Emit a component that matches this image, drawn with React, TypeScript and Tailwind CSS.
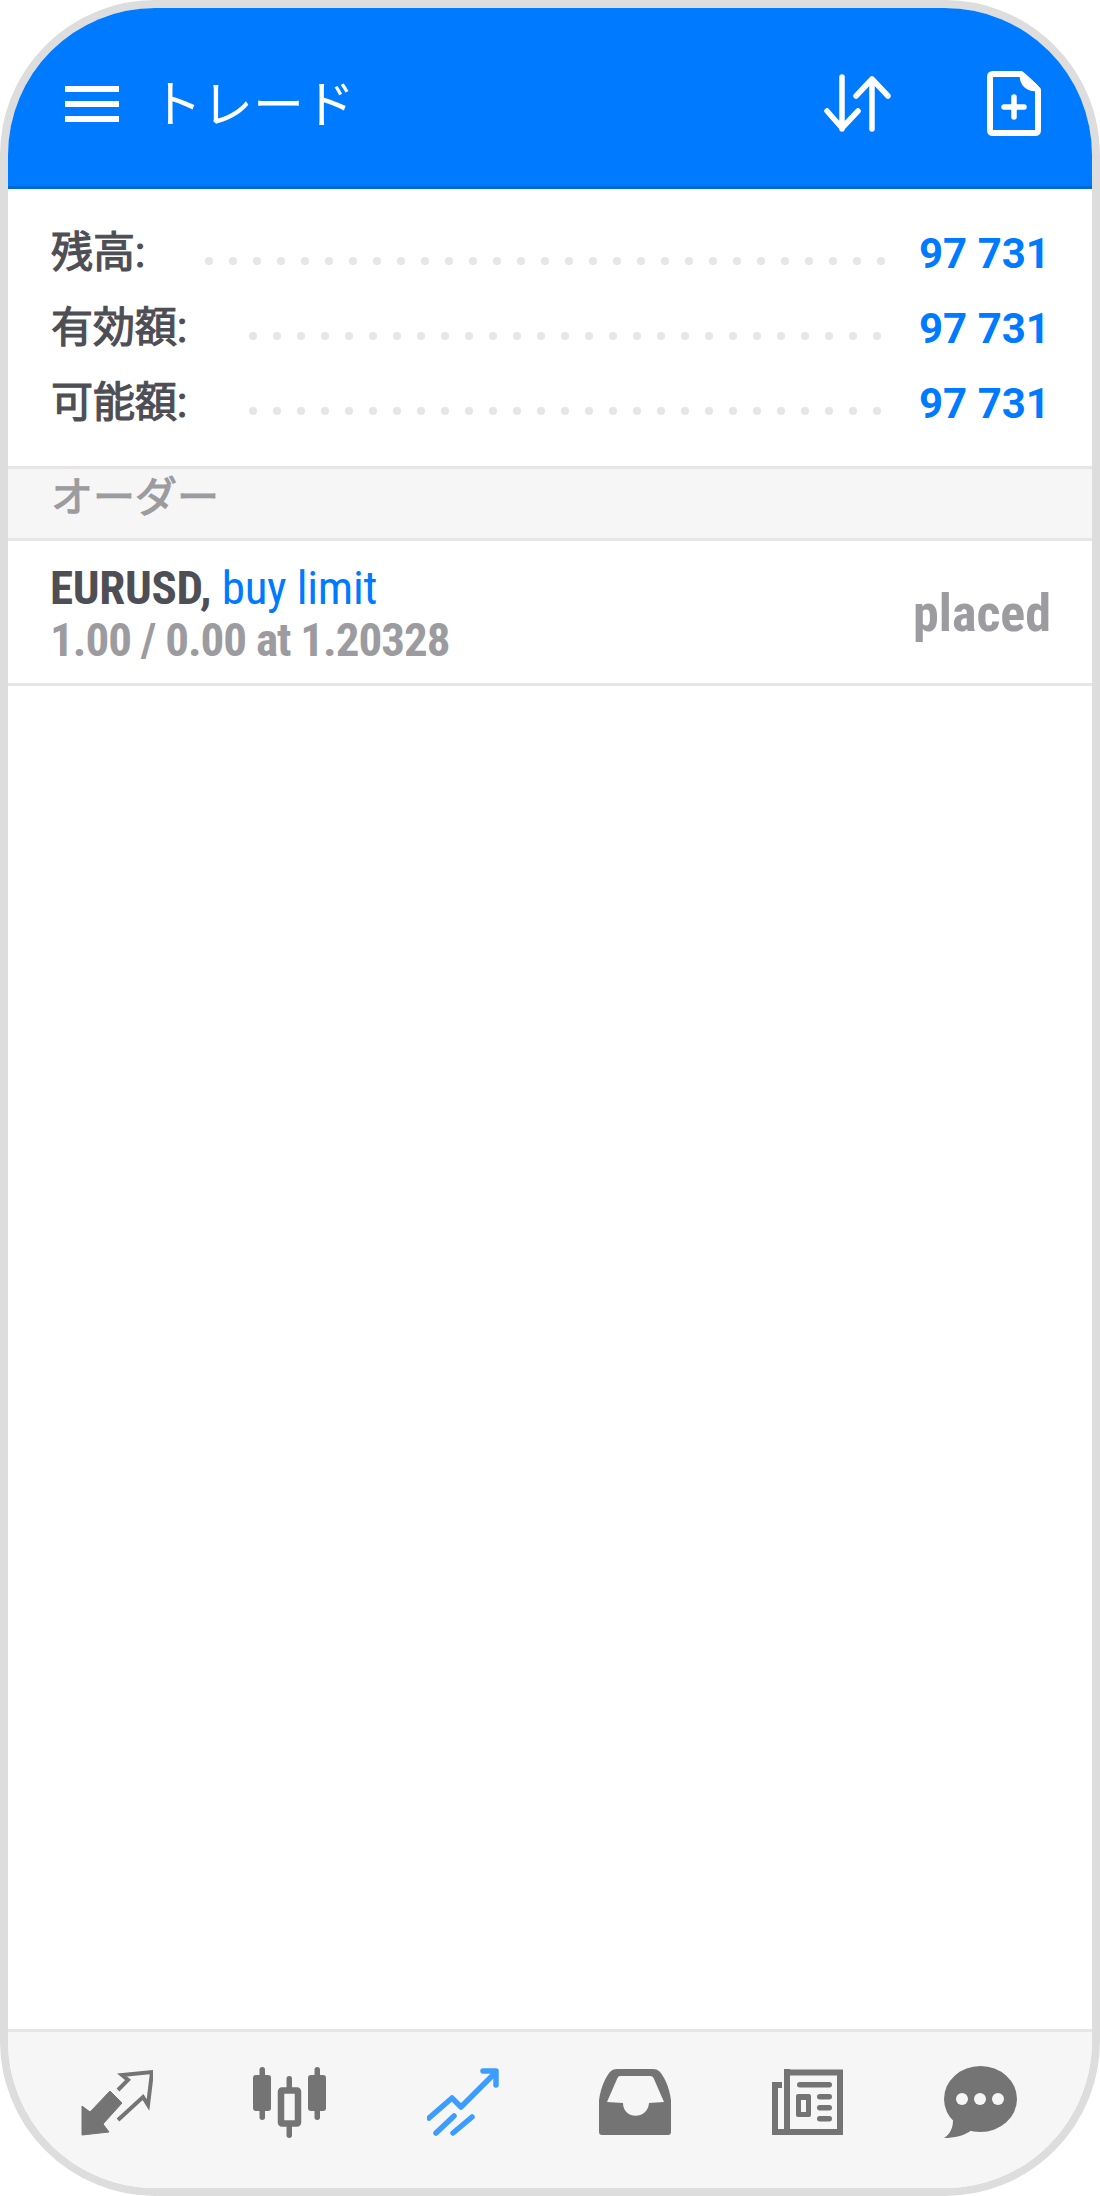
const font = "font-['Roboto','Noto_Sans_CJK_JP',sans-serif]";

function Dots({ count }: { count: number }) {
  return (
    <div className="flex items-center gap-4 pt-4">
      {Array.from({ length: count }).map((_, i) => (
        <span key={i} className="w-2 h-2 rounded-full bg-[#e6e6e6]" />
      ))}
    </div>
  );
}

function BalanceRow({ label, dots, value, gap }: { label: string; dots: number; value: string; gap: string }) {
  return (
    <div className="h-[75px] flex items-center justify-between">
      <span className="text-[42px] leading-none font-normal text-[#4e4e55] [-webkit-text-stroke:1.2px_#4e4e55]">{label}</span>
      <div className={`flex items-center ${gap}`}>
        <Dots count={dots} />
        <span className="w-[130px] whitespace-nowrap text-right text-[42px] leading-none font-bold text-[#007aff] pt-[2px]">{value}</span>
      </div>
    </div>
  );
}

function TransferIcon() {
  return (
    <svg width="72" height="72" viewBox="0 0 72 72" className="text-[#747474]">
      <path d="M1 69 L1 40 L9 46 L29 25 L41 37 L22 58 L28 66 Z" fill="currentColor" stroke="currentColor" strokeWidth="1" strokeLinejoin="round" />
      <path d="M37 24 L47 14 L41 9 L71 6 L67 39 L62 31 L37 54" fill="none" stroke="currentColor" strokeWidth="4" />
    </svg>
  );
}

function CandleIcon() {
  return (
    <svg width="73" height="72" viewBox="0 0 73 72" fill="currentColor" className="text-[#747474]">
      <rect x="0" y="9" width="18" height="36" rx="3" />
      <rect x="6.5" y="1" width="5.5" height="53" rx="2.7" />
      <rect x="55" y="9" width="18" height="36" rx="3" />
      <rect x="61.5" y="1" width="5.5" height="53" rx="2.7" />
      <rect x="33.5" y="10" width="5.5" height="62" rx="2.7" />
      <rect x="28" y="24.5" width="17" height="33" rx="1" fill="#f6f6f6" stroke="currentColor" strokeWidth="6.5" />
    </svg>
  );
}

function TradeIcon() {
  return (
    <svg width="72" height="72" viewBox="0 0 72 72" fill="none" stroke="#3d9dff" strokeWidth="5.5" strokeLinecap="round" strokeLinejoin="round">
      <path d="M2 52 L25 32 L34 41 L67 8" />
      <path d="M56 5 L69 5 L69 19" />
      <path d="M9 67 L27 50" />
      <path d="M26 67 L45 51" />
    </svg>
  );
}

function InboxIcon() {
  return (
    <svg width="72" height="72" viewBox="0 0 72 72" className="text-[#747474]">
      <path d="M0 34 C2 20 7 10 12 5 Q14 3 18 3 L54 3 Q58 3 60 5 C65 10 70 20 72 34 L72 66 Q72 69 69 69 L3 69 Q0 69 0 66 Z" fill="currentColor" />
      <path d="M21 10 L51 10 Q54 10 55 13 L65 36 L50 37 C49 54 24 54 24 37 L8 36 L18 13 Q19 10 21 10 Z" fill="#f6f6f6" />
    </svg>
  );
}

function NewsIcon() {
  return (
    <svg width="72" height="72" viewBox="0 0 72 72" fill="currentColor" className="text-[#747474]">
      <path d="M15 6.5 H68 V66 H3 V19 H10" fill="none" stroke="currentColor" strokeWidth="6" />
      <path d="M15 3 V68" stroke="currentColor" strokeWidth="6" />
      <rect x="25" y="16" width="35" height="5.5" rx="2.7" />
      <path fillRule="evenodd" d="M26 28 H37 Q39 28 39 30 V49 Q39 51 37 51 H26 Q24 51 24 49 V30 Q24 28 26 28 Z M29 34 V46 H34 V34 Z" />
      <rect x="45" y="28" width="15" height="5.5" rx="2.7" />
      <rect x="45" y="39" width="15" height="5.5" rx="2.7" />
      <rect x="45" y="50" width="15" height="5.5" rx="2.7" />
    </svg>
  );
}

function ChatIcon() {
  return (
    <svg width="73" height="72" viewBox="0 0 73 72" className="text-[#747474]">
      <ellipse cx="36.5" cy="33" rx="36.5" ry="33" fill="currentColor" />
      <path d="M9 54 C9 62 6 68 0 72 C10 72 20 70 28 64 Z" fill="currentColor" />
      <circle cx="18" cy="33" r="6" fill="#f6f6f6" />
      <circle cx="36" cy="33" r="6" fill="#f6f6f6" />
      <circle cx="54" cy="33" r="6" fill="#f6f6f6" />
    </svg>
  );
}

export default function App() {
  return (
    <div className={`${font} w-[1100px] h-[2196px] bg-white`}>
      <div className="h-full border-8 border-[#dddddd] rounded-[155px] overflow-hidden flex flex-col bg-white">
        {/* ヘッダー */}
        <header className="h-[181px] shrink-0 bg-[#007aff] border-b-[3px] border-[#0069d9] flex items-center pt-[13px] pl-[57px] pr-[51px] text-white">
          <div className="w-[54px] flex flex-col gap-[9px]">
            <span className="h-[6px] bg-white" />
            <span className="h-[6px] bg-white" />
            <span className="h-[6px] bg-white" />
          </div>
          <h1 className="ml-[32px] text-[51px] leading-none font-normal pt-1">トレード</h1>
          <div className="ml-auto flex items-center gap-[96px]">
            <svg width="68" height="60" viewBox="0 0 68 60" fill="none" stroke="white" strokeWidth="5.5" strokeLinecap="round" strokeLinejoin="round">
              <path d="M19 3 V55 M4 37 L19 54 L35 37" />
              <path d="M49 5 V55 M33 22 L49 5 L65 22" />
            </svg>
            <svg width="54" height="65" viewBox="0 0 54 65" fill="none" stroke="white" strokeLinejoin="round">
              <path d="M6 3 H34 L51 19 V59 Q51 62 48 62 H6 Q3 62 3 59 V6 Q3 3 6 3 Z" strokeWidth="6" />
              <path d="M33 3 C33 14 38 20 51 20 L51 15 L38 3 Z" fill="white" strokeWidth="1" />
              <path d="M17 36 H37 M27 26 V46" strokeWidth="5.5" strokeLinecap="round" />
            </svg>
          </div>
        </header>

        {/* 残高 */}
        <section className="h-[277px] shrink-0 py-[26px] pl-[43px] pr-[43px]">
          <BalanceRow label="残高:" dots={29} value="97 731" gap="gap-[34px]" />
          <BalanceRow label="有効額:" dots={27} value="97 731" gap="gap-[38px]" />
          <BalanceRow label="可能額:" dots={27} value="97 731" gap="gap-[38px]" />
        </section>

        <div className="h-[75px] shrink-0 bg-[#f6f6f6] border-y-[3px] border-[#e6e6e6] flex items-center pl-[43px] pb-[12px]">
          <span className="text-[42px] leading-none font-normal text-[#9b9ba0] [-webkit-text-stroke:1.2px_#9b9ba0]">オーダー</span>
        </div>

        <div className="h-[145px] shrink-0 border-b-[3px] border-[#e6e6e6] flex items-center justify-between pl-[42px] pr-[41px] pt-1 [font-stretch:75%]">
          <div className="text-[47px] leading-[52px] font-bold">
            <div className="tracking-[-0.3px]">
              <span className="text-[#4e4e55]">EURUSD, </span>
              <span className="font-normal text-[#007aff]">buy limit</span>
            </div>
            <div className="tracking-[-1px] text-[#9b9ba0]">1.00 / 0.00 at 1.20328</div>
          </div>
          <span className="text-[52px] leading-none font-bold text-[#9b9ba0]">placed</span>
        </div>

        <main className="flex-1" />

        {/* タブバー */}
        <nav className="h-[159px] shrink-0 bg-[#f6f6f6] border-t-[3px] border-[#e6e6e6] flex items-start justify-between pt-[34px] pl-[73px] pr-[75px]">
          <TransferIcon />
          <CandleIcon />
          <TradeIcon />
          <InboxIcon />
          <NewsIcon />
          <ChatIcon />
        </nav>
      </div>
    </div>
  );
}
